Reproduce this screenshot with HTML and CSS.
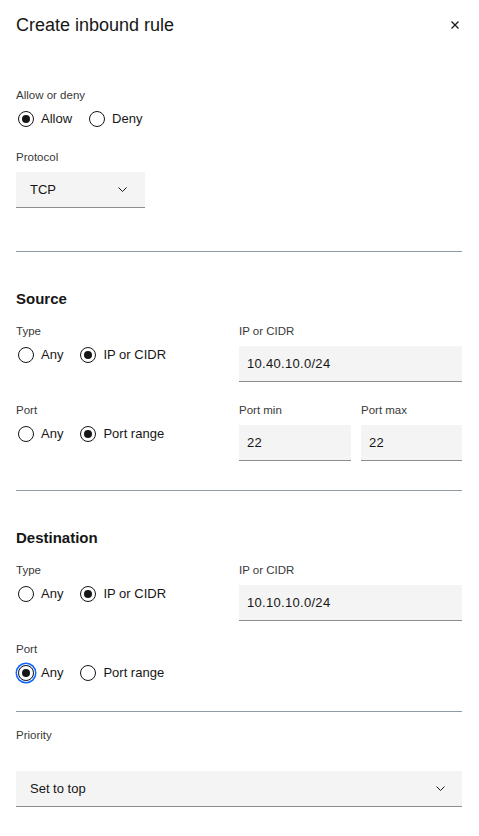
FILE: index.html
```html
<!DOCTYPE html>
<html lang="en">
<head>
<meta charset="utf-8">
<title>Create inbound rule</title>
<link rel="stylesheet" href="styles.css">
</head>
<body>
<div class="panel">
  <header class="panel-header">
    <h1 class="panel-title">Create inbound rule</h1>
    <button class="close-btn" aria-label="Close">
      <svg width="10" height="10" viewBox="0 0 10 10"><path d="M1.5 1.5 L8.5 8.5 M8.5 1.5 L1.5 8.5" stroke="#161616" stroke-width="1.2" fill="none"/></svg>
    </button>
  </header>

  <section class="section section-top">
    <div class="field-group">
      <div class="label">Allow or deny</div>
      <div class="radio-row">
        <label class="radio"><span class="radio-circle checked"></span><span class="radio-text">Allow</span></label>
        <label class="radio"><span class="radio-circle"></span><span class="radio-text">Deny</span></label>
      </div>
    </div>
    <div class="field-group protocol-group">
      <div class="label">Protocol</div>
      <div class="select select-small">
        <span class="select-value">TCP</span>
        <svg class="chevron" width="9" height="5" viewBox="0 0 9 5"><path d="M0.5 0.5 L4.5 4.5 L8.5 0.5" stroke="#161616" stroke-width="1" fill="none"/></svg>
      </div>
    </div>
  </section>

  <section class="section">
    <h2 class="section-title">Source</h2>
    <div class="grid">
      <div class="cell">
        <div class="label">Type</div>
        <div class="radio-row radio-row-field">
          <label class="radio"><span class="radio-circle"></span><span class="radio-text">Any</span></label>
          <label class="radio"><span class="radio-circle checked"></span><span class="radio-text">IP or CIDR</span></label>
        </div>
      </div>
      <div class="cell">
        <div class="label">IP or CIDR</div>
        <div class="input">10.40.10.0/24</div>
      </div>
      <div class="cell">
        <div class="label">Port</div>
        <div class="radio-row radio-row-field">
          <label class="radio"><span class="radio-circle"></span><span class="radio-text">Any</span></label>
          <label class="radio"><span class="radio-circle checked"></span><span class="radio-text">Port range</span></label>
        </div>
      </div>
      <div class="cell port-pair">
        <div class="port-field">
          <div class="label">Port min</div>
          <div class="input">22</div>
        </div>
        <div class="port-field">
          <div class="label">Port max</div>
          <div class="input">22</div>
        </div>
      </div>
    </div>
  </section>

  <section class="section section-dest">
    <h2 class="section-title">Destination</h2>
    <div class="grid">
      <div class="cell">
        <div class="label">Type</div>
        <div class="radio-row radio-row-field">
          <label class="radio"><span class="radio-circle"></span><span class="radio-text">Any</span></label>
          <label class="radio"><span class="radio-circle checked"></span><span class="radio-text">IP or CIDR</span></label>
        </div>
      </div>
      <div class="cell">
        <div class="label">IP or CIDR</div>
        <div class="input">10.10.10.0/24</div>
      </div>
      <div class="cell">
        <div class="label">Port</div>
        <div class="radio-row radio-row-field">
          <label class="radio"><span class="radio-circle checked focused"></span><span class="radio-text">Any</span></label>
          <label class="radio"><span class="radio-circle"></span><span class="radio-text">Port range</span></label>
        </div>
      </div>
      <div class="cell"></div>
    </div>
  </section>

  <section class="section-priority">
    <div class="label priority-label">Priority</div>
    <div class="select select-full">
      <span class="select-value">Set to top</span>
      <svg class="chevron" width="9" height="5" viewBox="0 0 9 5"><path d="M0.5 0.5 L4.5 4.5 L8.5 0.5" stroke="#161616" stroke-width="1" fill="none"/></svg>
    </div>
  </section>
</div>
</body>
</html>
```

FILE: styles.css
```css
* { box-sizing: border-box; }
html, body { margin: 0; padding: 0; background: #ffffff; }
body {
  font-family: "Liberation Sans", Arial, sans-serif;
  color: #161616;
  width: 479px;
}
.panel { padding: 0 17px 0 16px; }

.panel-header {
  display: flex;
  justify-content: space-between;
  align-items: center;
  padding-top: 11px;
}
.panel-title {
  margin: 0;
  font-size: 18px;
  font-weight: 400;
  line-height: 28px;
  color: #161616;
}
.close-btn {
  border: 0;
  background: none;
  padding: 0;
  width: 10px;
  height: 10px;
  margin-right: 2px;
  display: flex;
}

.label {
  font-size: 11.5px;
  line-height: 16px;
  color: #393939;
  margin-bottom: 7px;
}

.section {
  padding-top: 36px;
  padding-bottom: 29px;
  border-bottom: 1px solid #8f9aa2;
}
.section.section-top {
  padding-top: 48px;
  padding-bottom: 43px;
}
.section.section-dest { padding-bottom: 26px; }
.section-top .label { margin-bottom: 4px; }
.protocol-group { margin-top: 18px; }
.section-top .protocol-group .label { margin-bottom: 7px; }

.radio-row {
  display: flex;
  align-items: center;
  height: 24px;
  gap: 15px;
}
.radio-row-field { margin-top: -3px; }
.radio {
  display: flex;
  align-items: center;
  gap: 7px;
  font-size: 13px;
  line-height: 20px;
  color: #161616;
}
.radio-circle {
  width: 16px;
  height: 16px;
  margin-left: 2px;
  border: 1px solid #161616;
  border-radius: 50%;
  display: flex;
  align-items: center;
  justify-content: center;
  flex: none;
}
.radio-circle.checked::after {
  content: "";
  width: 8px;
  height: 8px;
  border-radius: 50%;
  background: #161616;
}
.radio-circle.focused {
  box-shadow: 0 0 0 1px #ffffff, 0 0 0 2.5px #0f62fe;
}

.select {
  display: flex;
  align-items: center;
  justify-content: space-between;
  height: 36px;
  background: #f4f4f4;
  border-bottom: 1px solid #8d8d8d;
  padding: 0 18px 0 14px;
  font-size: 13px;
}
.select-small { width: 129px; }
.select-full { width: 100%; padding-right: 17px; }
.chevron { display: block; }

.section-title {
  margin: 0 0 13px;
  font-size: 15px;
  font-weight: 700;
  line-height: 22px;
}

.grid {
  display: grid;
  grid-template-columns: 223px 223px;
  row-gap: 20px;
}
.input {
  height: 36px;
  background: #f4f4f4;
  border-bottom: 1px solid #8d8d8d;
  padding: 0 8px;
  display: flex;
  align-items: center;
  font-size: 13px;
  letter-spacing: 0.3px;
  color: #161616;
}
.port-pair {
  display: grid;
  grid-template-columns: 112px 1fr;
  column-gap: 10px;
}

.section-priority { padding-top: 15px; }
.priority-label { margin-bottom: 28px; }
```
